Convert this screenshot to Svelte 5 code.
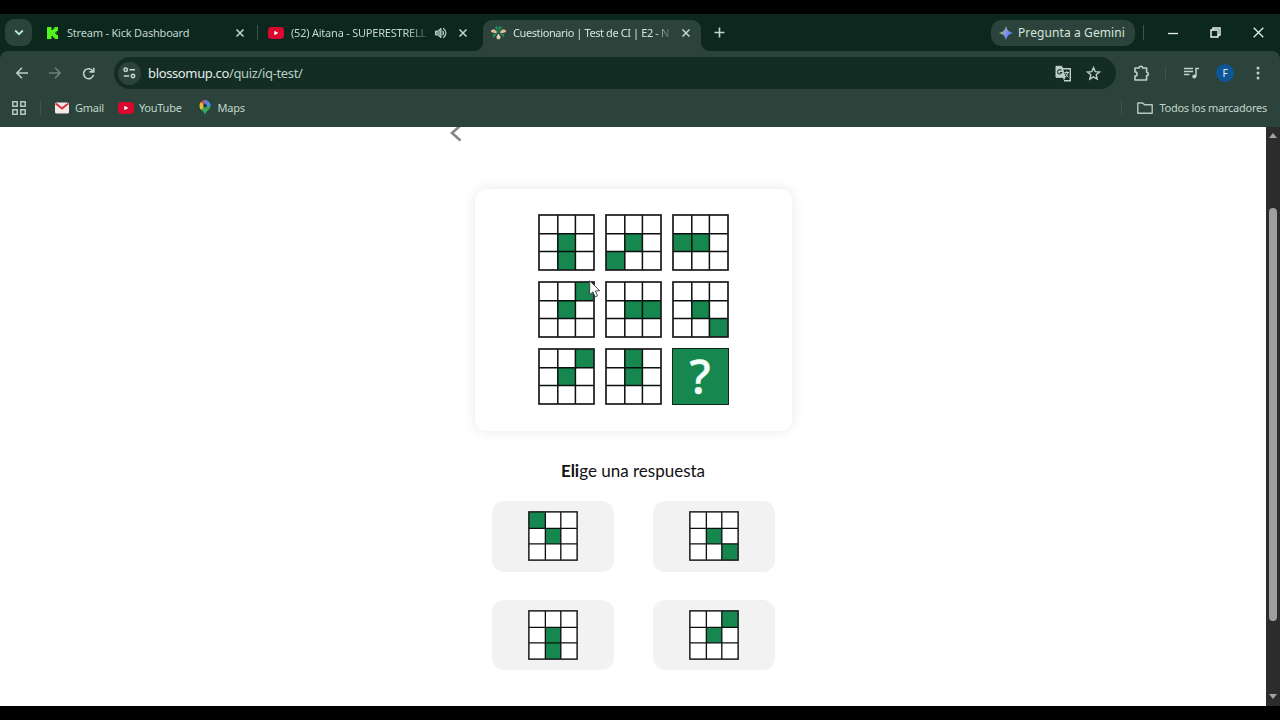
<script>
  const puzzle = [
    [4, 7], [4, 6], [3, 4],
    [2, 4], [4, 5], [4, 8],
    [2, 4], [1, 4], null,
  ];
  const answers = [[0, 4], [4, 8], [4, 7], [2, 4]];
  const edges = [1, 19.8, 37.4, 56];
</script>

{#snippet grid(cells)}
  <svg class="grid" viewBox="0 0 57 57" aria-hidden="true">
    <rect x="1" y="1" width="55" height="55" fill="#fff" />
    {#each cells as c}
      <rect
        x={edges[c % 3]} y={edges[Math.floor(c / 3)]}
        width={edges[(c % 3) + 1] - edges[c % 3]}
        height={edges[Math.floor(c / 3) + 1] - edges[Math.floor(c / 3)]}
        fill="#16874f" />
    {/each}
    <path d="M19.8 1V56M37.4 1V56M1 19.8H56M1 37.4H56" stroke="#0b0f0d" stroke-width="1.5" />
    <rect x="1" y="1" width="55" height="55" fill="none" stroke="#1a1a1a" stroke-width="1.7" />
  </svg>
{/snippet}

{#snippet youtube()}
  <svg class="yt" viewBox="0 0 16 12"><rect width="16" height="12" rx="3.4" fill="#d8082f" /><path d="M6.3 3.7v4.6L10.4 6z" fill="#fff" /></svg>
{/snippet}

{#snippet cross()}
  <svg class="cross" viewBox="0 0 10 10"><path d="M1.5 1.5l7 7M8.5 1.5l-7 7" stroke="currentColor" stroke-width="1.5" /></svg>
{/snippet}

<div class="screen">
  <header>
    <div class="strip">
      <button class="search" aria-label="Buscar pestañas">
        <svg width="10" height="7" viewBox="0 0 10 7"><path d="M1.2 1.5L5 5.2l3.8-3.7" fill="none" stroke="#b9e6d3" stroke-width="1.8" /></svg>
      </button>
      <div class="tab first">
        <svg width="13" height="14" viewBox="0 0 13 14"><path d="M1 1h4.500v3h1.500V2.500h1.500V1H12v4h-1.500v1.500H9v1h1.500V9H12v4H8.500v-1.500H7V10H5.500v3H1z" fill="#53f41b" /></svg>
        <span class="title kick">Stream - Kick Dashboard</span>
        {@render cross()}
      </div>
      <i class="rule"></i>
      <div class="tab second">
        {@render youtube()}
        <span class="title aitana">(52) Aitana - SUPERESTRELL</span>
        <svg class="sound" width="12" height="12" viewBox="0 0 12 12"><path d="M.5 4h2.300L6 1.200v9.600L2.800 8H.5z" fill="#829b90" stroke="#bfd0c8" /><path d="M7.500 3.800q2 2.200 0 4.400M8.200 1.300q5.500 4.700 0 9.400" fill="none" stroke="#bfd0c8" stroke-width="1.200" /></svg>
        {@render cross()}
      </div>
      <div class="tab active">
        <svg width="17" height="15" viewBox="0 0 17 15">
          <path d="M8.500 7L4.800 2.500 7 .7zM8.500 7l.2-6 3.300 1.200zM8 7.500L3.500 13l-.8-3.500zM9 7.500l5 5 .3-3.200z" fill="#23925c" />
          <path d="M7.500 7.200L5 8.200 1 7 1.300 5 4.300 4.300zM9.500 7.200l2.500 1 4-1.200-.3-2-3-.7z" fill="#e9b9a0" />
          <path d="M8.500 8.500l2.200 3.500-1 2.200H7.300l-1-2.200z" fill="#e8cbb6" />
          <path d="M6 4.300l2.500 2.500L11 4.300" fill="none" stroke="#1a6e48" stroke-width="1.800" />
        </svg>
        <span class="title quiz">Cuestionario | Test de CI | E2 - N</span>
        {@render cross()}
      </div>
      <svg class="plus" width="11" height="11" viewBox="0 0 11 11"><path d="M5.500.5v10M.5 5.500h10" stroke="#bdd5ca" stroke-width="1.600" /></svg>
      <div class="gemini">
        <svg width="14" height="14" viewBox="0 0 14 14">
          <defs><linearGradient id="spark" x1="0" x2="1" y1=".3" y2=".7"><stop stop-color="#a9c34a" /><stop offset=".3" stop-color="#7fb09a" /><stop offset=".5" stop-color="#8b8bf0" /><stop offset="1" stop-color="#3d7cf2" /></linearGradient></defs>
          <path d="M7 0Q8.200 5.800 14 7 8.200 8.200 7 14 5.800 8.200 0 7 5.800 5.800 7 0z" fill="url(#spark)" />
        </svg>
        <span>Pregunta a Gemini</span>
      </div>
      <i class="rule"></i>
      <div class="window">
        <svg width="10" height="12" viewBox="0 0 10 12"><path d="M0 6.500h10" stroke="#e4eeea" stroke-width="1.300" /></svg>
        <svg width="11" height="11" viewBox="0 0 11 11"><path d="M1 3h7v7H1zM3 3V1h7v7H8" fill="none" stroke="#eff6f3" stroke-width="1.400" /></svg>
        <svg width="11" height="11" viewBox="0 0 11 11"><path d="M.7.7l9.600 9.600M10.300.7L.7 10.300" stroke="#e4eeea" stroke-width="1.300" /></svg>
      </div>
    </div>

    <div class="toolbar">
      <div class="nav">
        <svg width="12" height="12" viewBox="0 0 12 12"><path d="M6 .8L.9 6 6 11.200M1 6h11" fill="none" stroke="#bfd0c8" stroke-width="1.500" /></svg>
        <svg width="12" height="12" viewBox="0 0 12 12"><path d="M6 .8L11.100 6 6 11.200M11 6H0" fill="none" stroke="#6d8379" stroke-width="1.500" /></svg>
        <svg width="13" height="13" viewBox="0 0 13 13"><path d="M11 4.300A5 5 0 1 0 11.500 7.800M11.800.8v4.100H7.500" fill="none" stroke="#bfd0c8" stroke-width="1.600" /></svg>
      </div>
      <div class="omnibox">
        <div class="site">
          <svg width="13" height="12" viewBox="0 0 13 12"><g fill="none" stroke="#c9d8d1" stroke-width="1.500"><circle cx="2.700" cy="2.700" r="1.700" /><path d="M6.500 2.700H12M.8 9h5.400" /><circle cx="10" cy="9" r="1.700" /></g></svg>
        </div>
        <span class="url"><b>blossomup.co</b>/quiz/iq-test/</span>
        <svg width="17" height="17" viewBox="0 0 17 17">
          <path d="M7 3.800h8.300v12H9" fill="none" stroke="#bfd0c8" stroke-width="1.400" />
          <path d="M1 1.300h5.800l3.400 11H1z" fill="#bfd0c8" stroke="#bfd0c8" stroke-linejoin="round" /><path d="M8 12.500h2.500L8.800 15.500z" fill="#bfd0c8" />
          <path d="M6.500 5.500a2.200 2.200 0 1 0 .3 2H4.800" fill="none" stroke="#2b433a" stroke-width="1.100" /><path d="M9.500 7.500h4.500M11.800 6v1.500M13 7.700q-.8 3-3 4.500M10.500 8.500q1 2.500 3 3.800" fill="none" stroke="#bfd0c8" />
        </svg>
        <svg width="15" height="15" viewBox="0 0 15 15"><path d="M7.500 1.600l1.700 4 4.300.4-3.300 2.800 1 4.300-3.700-2.300-3.700 2.300 1-4.300L1.500 6l4.300-.4z" fill="none" stroke="#bfd0c8" stroke-width="1.400" /></svg>
      </div>
      <div class="tools">
        <svg width="17" height="17" viewBox="0 0 17 17"><path d="M2 3h4.200a1.700 1.700 0 0 1 3.400 0h4v4.200a1.700 1.700 0 0 1 0 3.400V15H2v-3.900a2.100 2.100 0 0 0 0-4.200z" fill="none" stroke="#bfd0c8" stroke-width="1.600" stroke-linejoin="round" /></svg>
        <i class="rule"></i>
        <svg width="15" height="12" viewBox="0 0 15 12"><path d="M0 1.500h9M0 4.500h9M0 7.500h5.500" stroke="#bfd0c8" stroke-width="1.400" /><path d="M12 9.500V1.500h3" fill="none" stroke="#bfd0c8" stroke-width="1.500" /><circle cx="10.300" cy="9.500" r="2" fill="#bfd0c8" /></svg>
        <div class="avatar">F</div>
        <svg width="4" height="14" viewBox="0 0 4 14" fill="#bfd0c8"><circle cx="2" cy="2" r="1.500" /><circle cx="2" cy="7" r="1.500" /><circle cx="2" cy="12" r="1.500" /></svg>
      </div>
    </div>

    <div class="bookmarks">
      <svg width="14" height="14" viewBox="0 0 14 14"><path d="M.8.800h4.400v4.400H.8zM8.800.800h4.400v4.400H8.800zM.8 8.800h4.400v4.400H.8zM8.800 8.800h4.400v4.400H8.800z" fill="none" stroke="#b5c7bf" stroke-width="1.500" /></svg>
      <i class="rule"></i>
      <svg class="gmail" width="14" height="12" viewBox="0 0 14 12"><rect y=".5" width="14" height="11" rx="1.500" fill="#f2e9e7" /><path d="M.7 1.500L7 6.500l6.300-5" fill="none" stroke="#d9323b" stroke-width="2" /></svg>
      <span class="bm-gmail">Gmail</span>
      {@render youtube()}
      <span class="bm-yt">YouTube</span>
      <svg class="maps" width="12" height="15" viewBox="0 0 12 15">
        <path d="M6 15C5.500 11 .5 10 .5 5.700A5.500 5.500 0 0 1 6 .3a5.500 5.500 0 0 1 5.500 5.400C11.500 10 6.500 11 6 15z" fill="#3aa757" />
        <path d="M2 2L6 6 9.300 1.400A5.500 5.500 0 0 0 2 2z" fill="#e3423a" /><path d="M9.300 1.400L6 6h5.500a5.500 5.500 0 0 0-2.200-4.600z" fill="#4c8df5" /><path d="M5 .4a5.500 5.500 0 0 1 4.500 1.100L6.500 5z" fill="#4285f4" /><path d="M.6 5q.4-2 1.400-3l4 4-4 4Q.5 8 .6 5z" fill="#efb92e" /><circle cx="6" cy="5.600" r="1.900" fill="#1c3b58" />
      </svg>
      <span class="bm-maps">Maps</span>
      <i class="rule end"></i>
      <svg width="16" height="12" viewBox="0 0 16 12"><path d="M.8 1h5l1.700 1.800h7.700V11.200H.8z" fill="none" stroke="#b5c7bf" stroke-width="1.400" stroke-linejoin="round" /></svg>
      <span class="bm-all">Todos los marcadores</span>
    </div>
  </header>

  <main>
    <div class="content">
      <svg class="back" width="12" height="17" viewBox="0 0 12 17"><path d="M10.500-1.500L2 6l8.500 7.500" fill="none" stroke="#858585" stroke-width="2.600" /></svg>
      <section class="card">
        {#each puzzle as cells}
          {#if cells}
            {@render grid(cells)}
          {:else}
            <div class="unknown">?</div>
          {/if}
        {/each}
      </section>
      <h1><b>Eli</b>ge una respuesta</h1>
      <div class="answers">
        {#each answers as cells}
          <button class="answer" aria-label="Respuesta">{@render grid(cells)}</button>
        {/each}
      </div>
    </div>
    <aside class="scroll">
      <svg width="8" height="5" viewBox="0 0 8 5"><path d="M4 0l4 5H0z" fill="#a2a2a2" /></svg>
      <div class="thumb"></div>
      <svg width="8" height="5" viewBox="0 0 8 5"><path d="M0 0h8L4 5z" fill="#a2a2a2" /></svg>
    </aside>
  </main>
  <svg class="pointer" width="13" height="20" viewBox="0 0 13 20"><path d="M.7.8v14l3.200-2.900 2.200 5 2.500-1.100-2.200-4.800 4.300-.3z" fill="#fff" stroke="#333" stroke-width=".9" /></svg>
</div>

<style>
  :global(body) { background: #000; }
  .screen {
    box-sizing: border-box; width: 1280px; height: 720px; padding: 14px 0;
    display: flex; flex-direction: column; background: #000; overflow: hidden;
    position: relative; font-family: "Noto Sans", "Open Sans", sans-serif;
  }
  svg { display: block; flex: none; }
  button { border: 0; padding: 0; }
  span { white-space: nowrap; }
  header { height: 113px; flex: none; background: #0c271e; color: #c3d5cc; font-size: 11px; }
  .rule { width: 1px; height: 15px; background: #3a564b; flex: none; }

  .strip { height: 37px; display: flex; align-items: center; }
  .search {
    width: 27px; height: 27px; margin-left: 5px; border-radius: 9px; background: #2b433a;
    display: flex; align-items: center; justify-content: center;
  }
  .tab { display: flex; align-items: center; height: 31px; box-sizing: border-box; }
  .first { width: 225px; padding-left: 14px; padding-right: 12px; }
  .second { width: 225px; padding-left: 10px; padding-right: 15px; }
  .active {
    width: 218px; height: 31px; align-self: flex-end; background: #2b433a; color: #d4e3dc;
    border-radius: 9px 9px 0 0; padding: 0 10px 6px 7px; position: relative;
  }
  .active::before, .active::after {
    content: ""; position: absolute; bottom: 0; width: 8px; height: 8px;
  }
  .active::before { left: -8px; background: radial-gradient(circle at 0 0, transparent 7.5px, #2b433a 8px); }
  .active::after { right: -8px; background: radial-gradient(circle at 100% 0, transparent 7.5px, #2b433a 8px); }
  .title { line-height: 18px; }
  .tab .cross { width: 10px; height: 10px; margin-left: auto; color: #c6d6ce; }
  .kick { margin-left: 8px; letter-spacing: -0.2px; }
  .yt { width: 16px; height: 12px; }
  .aitana {
    margin-left: 7px; width: 135px; letter-spacing: -0.22px;
    mask-image: linear-gradient(to right, #000 86%, rgb(0 0 0 / 25%));
  }
  .sound { margin-left: 9px; }
  .quiz {
    margin-left: 6px; width: 157px; letter-spacing: -0.4px;
    mask-image: linear-gradient(to right, #000 90%, rgb(0 0 0 / 20%));
  }
  .plus { margin-left: 13px; }
  .gemini {
    width: 144px; height: 26px; box-sizing: border-box; margin-left: auto; margin-right: 8px;
    padding-left: 8px; border-radius: 10px; background: #2b433a; color: #d4e3dc;
    display: flex; align-items: center; gap: 5px; font-size: 12px; letter-spacing: 0.1px;
  }
  .window { display: flex; align-items: center; gap: 32px; padding: 0 16px 0 24px; }

  .toolbar {
    height: 44px; background: #2b433a; border-radius: 8px 8px 0 0;
    display: flex; align-items: center;
  }
  .nav { width: 114px; box-sizing: border-box; padding-left: 16px; display: flex; align-items: center; gap: 21px; }
  .omnibox {
    width: 1002px; height: 32px; box-sizing: border-box; border-radius: 16px; background: #132c24;
    display: flex; align-items: center; padding: 0 15px 0 4px;
  }
  .site { width: 23px; height: 23px; border-radius: 50%; background: #2b433a; display: flex; align-items: center; justify-content: center; }
  .url { margin: 0 auto 0 7px; font-size: 13px; color: #b9ccc3; letter-spacing: -0.36px; }
  .url b { font-weight: 400; color: #e3ede8; }
  .omnibox > svg + svg { margin-left: 14px; }
  .tools { flex: 1; display: flex; align-items: center; padding-left: 17px; }
  .tools .rule { margin: 0 18px 0 15px; }
  .avatar {
    width: 18px; height: 18px; border-radius: 50%; background: #0d5697; color: #e1edf5;
    font-size: 10px; line-height: 18px; text-align: center; margin: 0 22px 0 17px;
  }

  .bookmarks { height: 25px; padding: 0 13px 7px 12px; background: #2b433a; display: flex; align-items: center; letter-spacing: -0.25px; }
  .bookmarks .rule { margin-left: 14px; }
  .gmail { margin-left: 14px; }
  .bm-gmail { margin: 0 14px 0 6px; }
  .bm-yt { margin: 0 17px 0 5px; }
  .bm-maps { margin: 0 auto 0 7px; }
  .bookmarks .rule.end { margin: 0 15px 0 0; }
  .bm-all { margin-left: 6px; }

  main { height: 579px; flex: none; display: flex; background: #fff; }
  .content { flex: 1; display: flex; flex-direction: column; align-items: center; }
  .back { align-self: flex-start; margin-left: 450px; }
  .card {
    width: 317px; height: 242px; box-sizing: border-box; margin-top: 44.5px; padding-top: 25.500px;
    border-radius: 12px; background: #fff; box-shadow: 0 0 14px rgb(0 0 0 / 9%);
    display: grid; grid-template-columns: repeat(3, 57px); grid-auto-rows: 57px;
    gap: 10px; justify-content: center; align-content: start;
  }
  .card .grid { width: 57px; height: 57px; }
  .unknown {
    border: 1.500px solid #10251a; background: #16874f; color: #f2fff8;
    font: 500 47px/54px "Noto Sans", sans-serif; text-align: center;
    -webkit-text-stroke: 0.5px #f2fff8;
  }
  h1 { margin: 28.500px 0 0; height: 24px; font: 400 17px/24px Lato, sans-serif; color: #111; }
  h1 b { font-weight: 700; }
  .answers { margin: 18px 0 0 1px; display: grid; grid-template-columns: 122.500px 122.500px; gap: 28px 38.500px; }
  .answer {
    height: 70.500px; border-radius: 12px; background: #f2f2f2;
    display: flex; align-items: center; justify-content: center;
  }
  .answer .grid { width: 50px; height: 50px; }
  .scroll {
    width: 14px; background: #2c2c2c; box-sizing: border-box; padding: 6px 0 7px;
    display: flex; flex-direction: column; align-items: center;
  }
  .thumb { width: 8px; height: 413px; margin: 70px 0 auto; border-radius: 4px; background: #9f9f9f; }
  .pointer { position: absolute; left: 589px; top: 280px; }
</style>
